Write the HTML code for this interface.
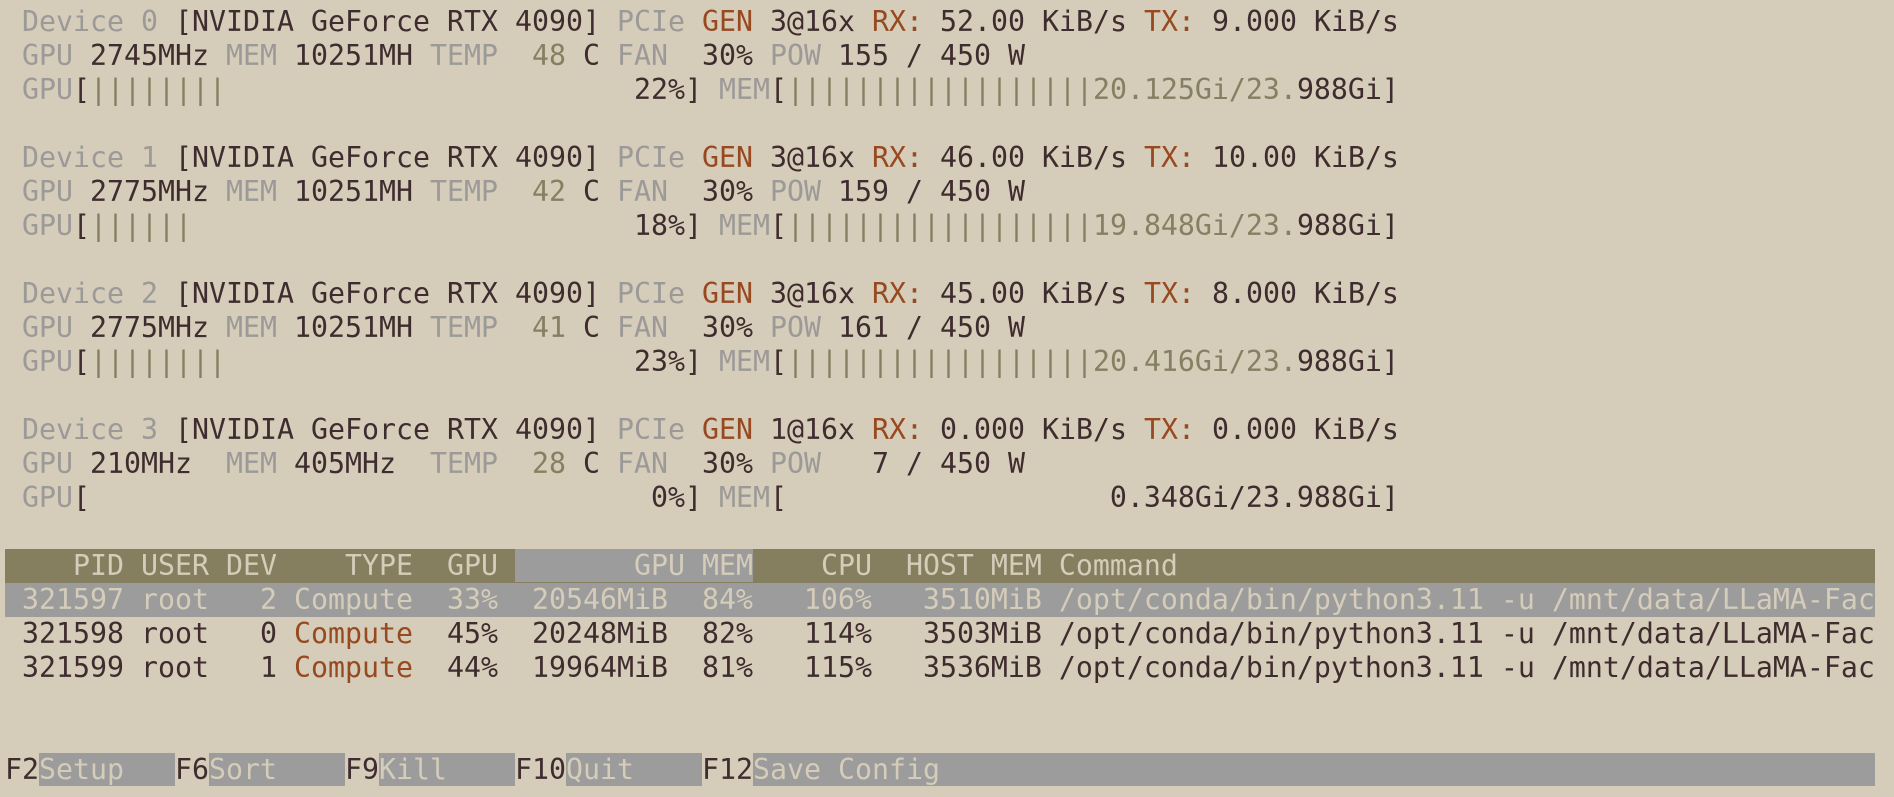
<!DOCTYPE html>
<html><head><meta charset="utf-8"><style>
html,body{margin:0;padding:0;background:#d5ccb9;width:1894px;height:797px;overflow:hidden}
#t{position:absolute;left:5px;top:5px;font-family:"DejaVu Sans Mono","Liberation Mono",monospace;font-size:28.24px;line-height:34px;color:#3f2c2e}
.l{height:34px;width:1870px;white-space:pre;overflow:hidden}
.g{color:#9c9a98}.d{color:#3f2c2e}.o{color:#97491f}.v{color:#868062}
.hd{background:#857f60;color:#d5ccb9}
.sg{background:#9c9c9c;color:#d5ccb9}
.sel{background:#9c9c9c;color:#d5ccb9}
</style></head><body><div id="t"><div class="l"> <span class="g">Device 0</span> [NVIDIA GeForce RTX 4090] <span class="g">PCIe</span> <span class="o">GEN</span> 3@16x <span class="o">RX:</span> 52.00 KiB/s <span class="o">TX:</span> 9.000 KiB/s</div><div class="l"> <span class="g">GPU</span> 2745MHz <span class="g">MEM</span> 10251MH <span class="g">TEMP</span>  <span class="v">48</span> C <span class="g">FAN</span>  30% <span class="g">POW</span> 155 / 450 W</div><div class="l"> <span class="g">GPU</span>[<span class="v">||||||||</span>                        22%] <span class="g">MEM</span>[<span class="v">||||||||||||||||||20.125Gi/23.</span>988Gi]</div><div class="l"></div><div class="l"> <span class="g">Device 1</span> [NVIDIA GeForce RTX 4090] <span class="g">PCIe</span> <span class="o">GEN</span> 3@16x <span class="o">RX:</span> 46.00 KiB/s <span class="o">TX:</span> 10.00 KiB/s</div><div class="l"> <span class="g">GPU</span> 2775MHz <span class="g">MEM</span> 10251MH <span class="g">TEMP</span>  <span class="v">42</span> C <span class="g">FAN</span>  30% <span class="g">POW</span> 159 / 450 W</div><div class="l"> <span class="g">GPU</span>[<span class="v">||||||</span>                          18%] <span class="g">MEM</span>[<span class="v">||||||||||||||||||19.848Gi/23.</span>988Gi]</div><div class="l"></div><div class="l"> <span class="g">Device 2</span> [NVIDIA GeForce RTX 4090] <span class="g">PCIe</span> <span class="o">GEN</span> 3@16x <span class="o">RX:</span> 45.00 KiB/s <span class="o">TX:</span> 8.000 KiB/s</div><div class="l"> <span class="g">GPU</span> 2775MHz <span class="g">MEM</span> 10251MH <span class="g">TEMP</span>  <span class="v">41</span> C <span class="g">FAN</span>  30% <span class="g">POW</span> 161 / 450 W</div><div class="l"> <span class="g">GPU</span>[<span class="v">||||||||</span>                        23%] <span class="g">MEM</span>[<span class="v">||||||||||||||||||20.416Gi/23.</span>988Gi]</div><div class="l"></div><div class="l"> <span class="g">Device 3</span> [NVIDIA GeForce RTX 4090] <span class="g">PCIe</span> <span class="o">GEN</span> 1@16x <span class="o">RX:</span> 0.000 KiB/s <span class="o">TX:</span> 0.000 KiB/s</div><div class="l"> <span class="g">GPU</span> 210MHz  <span class="g">MEM</span> 405MHz  <span class="g">TEMP</span>  <span class="v">28</span> C <span class="g">FAN</span>  30% <span class="g">POW</span>   7 / 450 W</div><div class="l"> <span class="g">GPU</span>[                                 0%] <span class="g">MEM</span>[                   0.348Gi/23.988Gi]</div><div class="l"></div><div class="l hd">    PID USER DEV    TYPE  GPU <span class="sg">       GPU MEM</span>    CPU  HOST MEM Command</div><div class="l sel"> 321597 root   2 Compute  33%  20546MiB  84%   106%   3510MiB /opt/conda/bin/python3.11 -u /mnt/data/LLaMA-Fac</div><div class="l"> 321598 root   0 <span class="o">Compute</span>  45%  20248MiB  82%   114%   3503MiB /opt/conda/bin/python3.11 -u /mnt/data/LLaMA-Fac</div><div class="l"> 321599 root   1 <span class="o">Compute</span>  44%  19964MiB  81%   115%   3536MiB /opt/conda/bin/python3.11 -u /mnt/data/LLaMA-Fac</div><div class="l"></div><div class="l"></div><div class="l">F2<span class="sg">Setup   </span>F6<span class="sg">Sort    </span>F9<span class="sg">Kill    </span>F10<span class="sg">Quit    </span>F12<span class="sg">Save Config                                                       </span></div></div></body></html>
